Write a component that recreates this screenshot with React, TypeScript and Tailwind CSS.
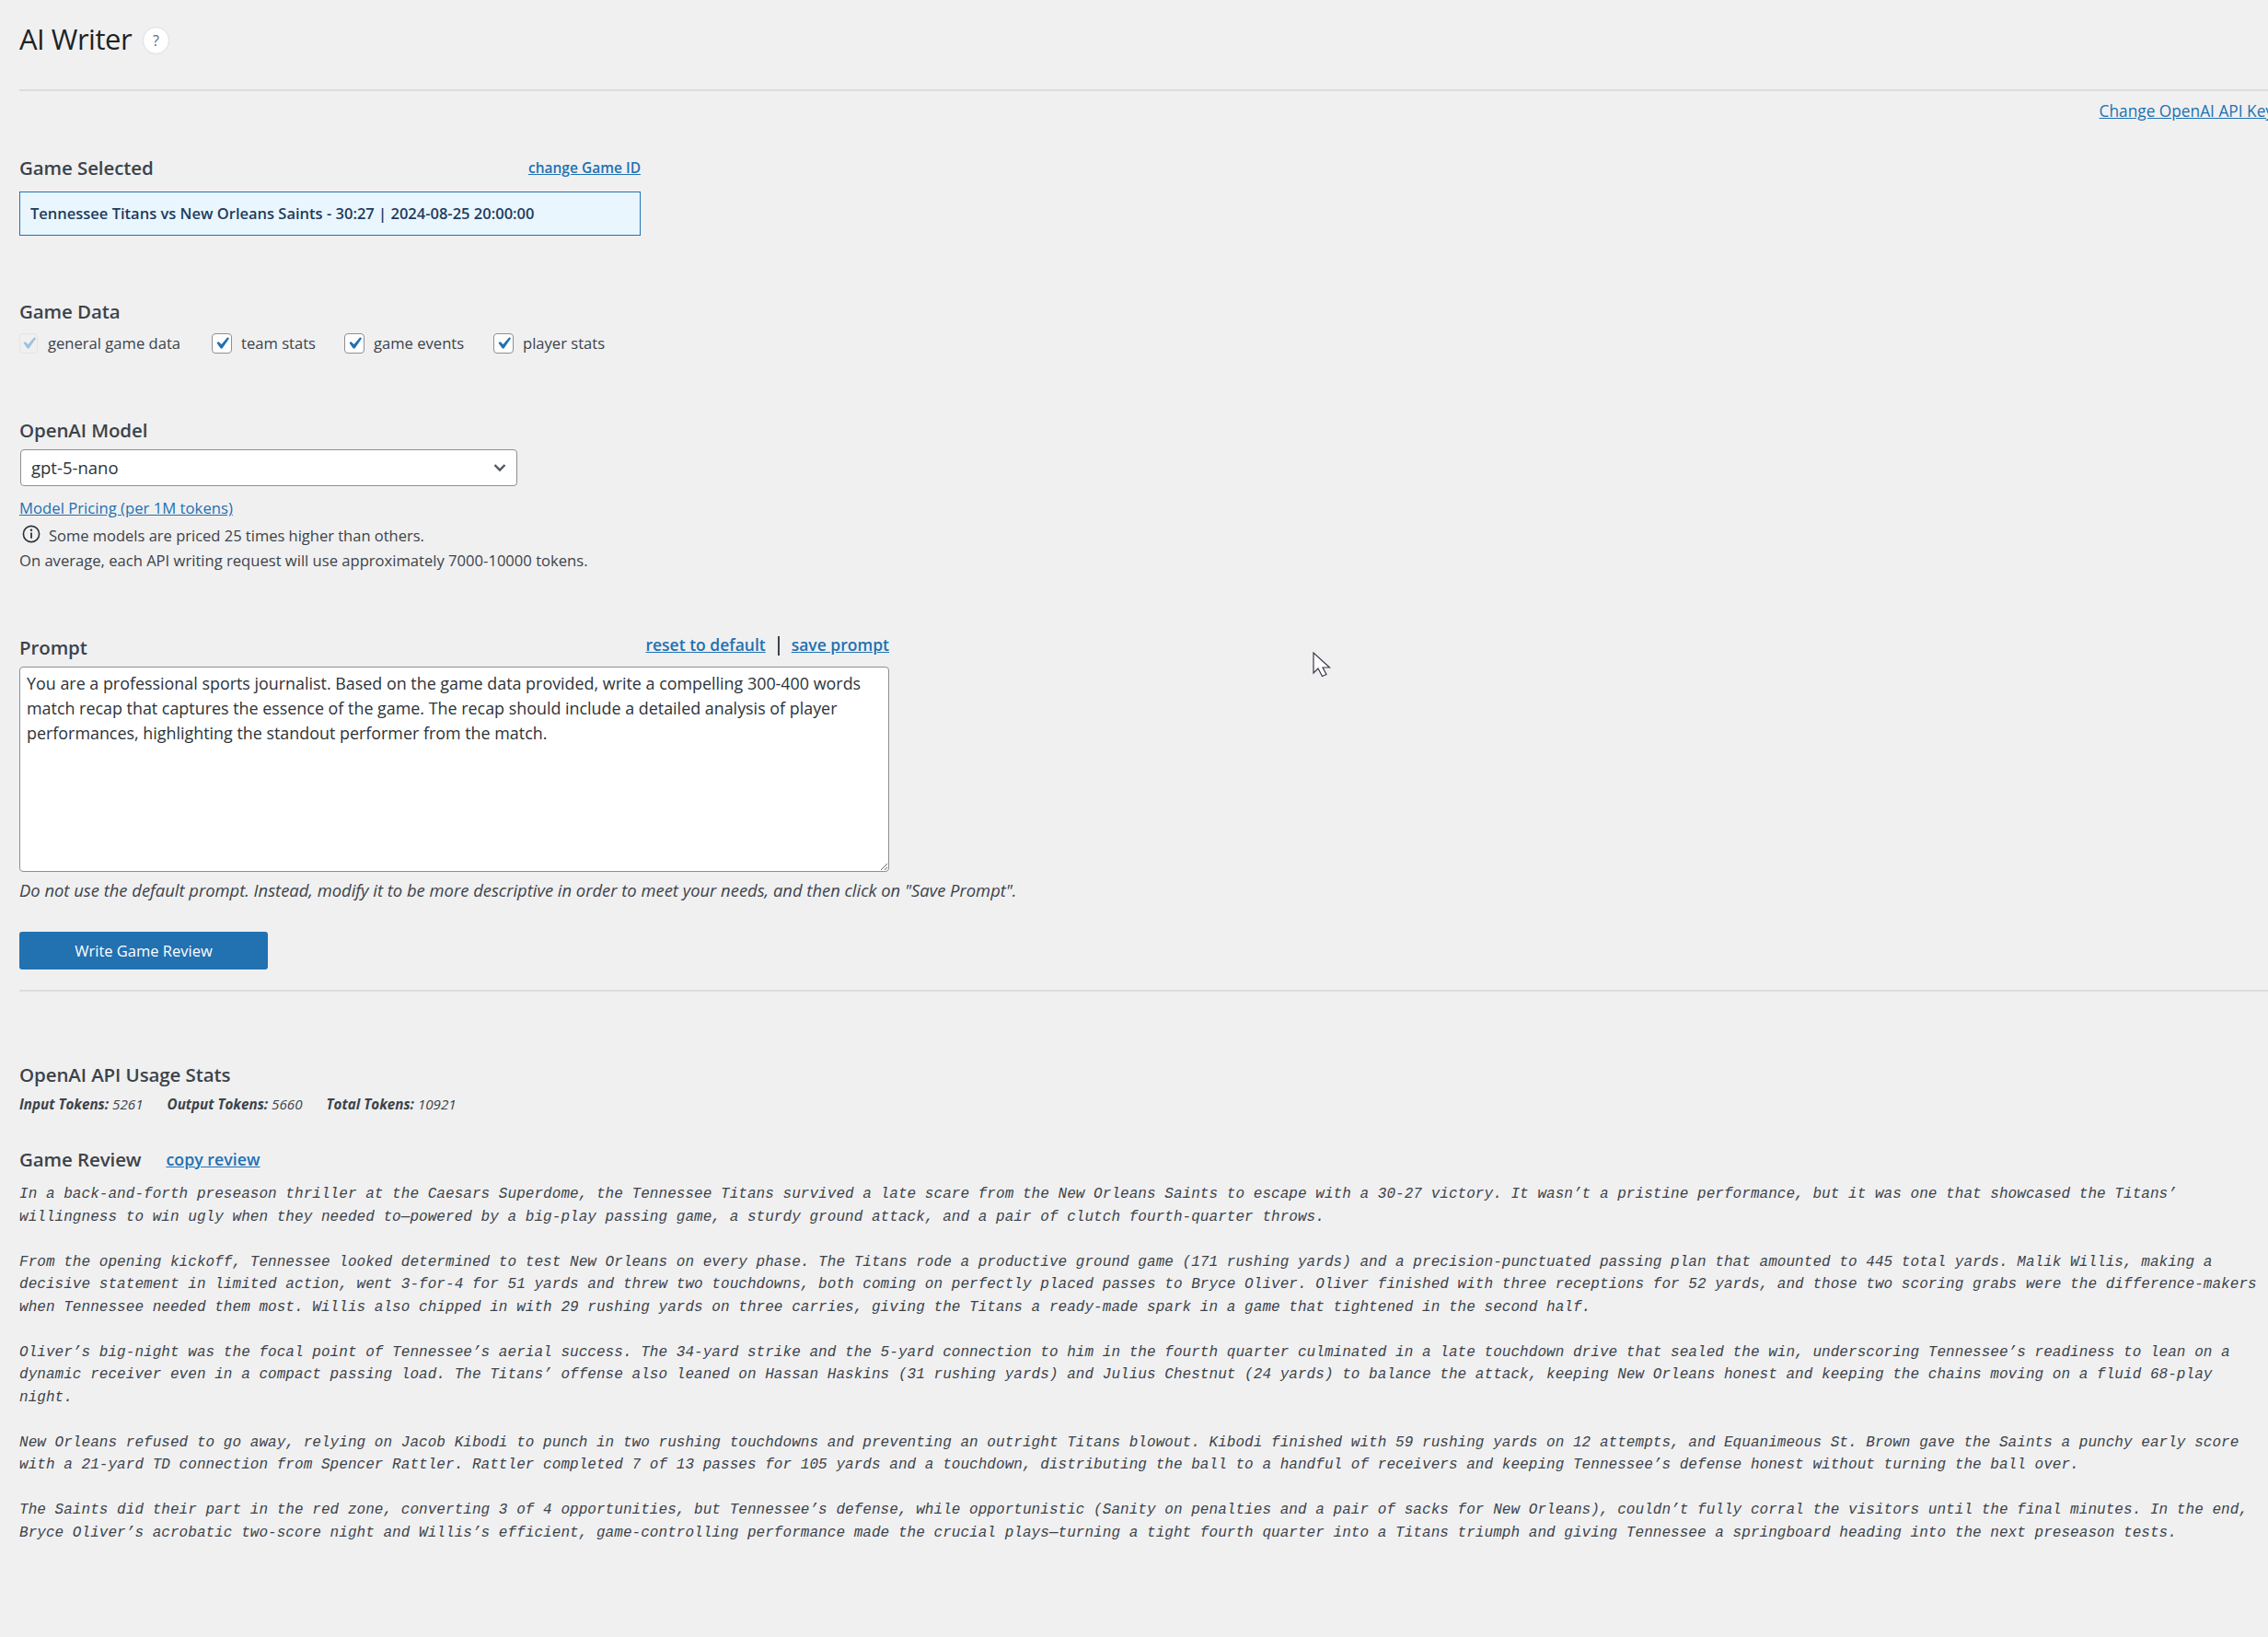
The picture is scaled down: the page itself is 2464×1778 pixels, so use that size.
const sans = "font-['Open_Sans','Liberation_Sans',sans-serif]";

const REVIEW = [
  "In a back-and-forth preseason thriller at the Caesars Superdome, the Tennessee Titans survived a late scare from the New Orleans Saints to escape with a 30-27 victory. It wasn’t a pristine performance, but it was one that showcased the Titans’ willingness to win ugly when they needed to—powered by a big-play passing game, a sturdy ground attack, and a pair of clutch fourth-quarter throws.",
  "From the opening kickoff, Tennessee looked determined to test New Orleans on every phase. The Titans rode a productive ground game (171 rushing yards) and a precision-punctuated passing plan that amounted to 445 total yards. Malik Willis, making a decisive statement in limited action, went 3-for-4 for 51 yards and threw two touchdowns, both coming on perfectly placed passes to Bryce Oliver. Oliver finished with three receptions for 52 yards, and those two scoring grabs were the difference-makers when Tennessee needed them most. Willis also chipped in with 29 rushing yards on three carries, giving the Titans a ready-made spark in a game that tightened in the second half.",
  "Oliver’s big-night was the focal point of Tennessee’s aerial success. The 34-yard strike and the 5-yard connection to him in the fourth quarter culminated in a late touchdown drive that sealed the win, underscoring Tennessee’s readiness to lean on a dynamic receiver even in a compact passing load. The Titans’ offense also leaned on Hassan Haskins (31 rushing yards) and Julius Chestnut (24 yards) to balance the attack, keeping New Orleans honest and keeping the chains moving on a fluid 68-play night.",
  "New Orleans refused to go away, relying on Jacob Kibodi to punch in two rushing touchdowns and preventing an outright Titans blowout. Kibodi finished with 59 rushing yards on 12 attempts, and Equanimeous St. Brown gave the Saints a punchy early score with a 21-yard TD connection from Spencer Rattler. Rattler completed 7 of 13 passes for 105 yards and a touchdown, distributing the ball to a handful of receivers and keeping Tennessee’s defense honest without turning the ball over.",
  "The Saints did their part in the red zone, converting 3 of 4 opportunities, but Tennessee’s defense, while opportunistic (Sanity on penalties and a pair of sacks for New Orleans), couldn’t fully corral the visitors until the final minutes. In the end, Bryce Oliver’s acrobatic two-score night and Willis’s efficient, game-controlling performance made the crucial plays—turning a tight fourth quarter into a Titans triumph and giving Tennessee a springboard heading into the next preseason tests.",
];

function Check({ disabled, label, className }: { disabled?: boolean; label: string; className: string }) {
  return (
    <div className={`flex items-center ${className}`}>
      <div
        className={
          disabled
            ? "mr-[11px] flex h-[22px] w-[20px] items-center justify-center rounded-[4px] border border-[#e4e4e6] bg-[#f0f0f1]"
            : "mr-[10px] flex h-[22px] w-[22px] items-center justify-center rounded-[4px] border border-[#8c8f94] bg-white"
        }
      >
        <svg width="26" height="26" viewBox="0 0 20 20" className="shrink-0">
          <path
            d="M14.83 4.89l1.34.94-5.81 8.38H9.02L5.78 9.67l1.34-1.25 2.57 2.4z"
            fill={disabled ? "#9fc2dd" : "#2271b1"}
          />
        </svg>
      </div>
      <span className="text-[16.6px] leading-6 text-[#3c434a]">{label}</span>
    </div>
  );
}

function Label({ children }: { children: React.ReactNode }) {
  return <div className="text-[20.5px] leading-6 font-semibold tracking-[-0.1px] text-[#3c434a]">{children}</div>;
}

export default function App() {
  return (
    <div className={`relative h-[1778px] w-full overflow-hidden bg-[#f0f0f1] ${sans}`}>
      <div className="w-[2470px] pl-[21px]">
        {/* Header */}
        <div className="flex h-[99px] items-start border-b-2 border-[#dcdcde] pt-[22px]">
          <h1 className="text-[31px] leading-10 tracking-[-0.5px] text-[#1d2327]">AI Writer</h1>
          <div className="mt-[7px] ml-[12px] flex h-[30px] w-[29px] items-center justify-center rounded-full border border-[#dcdcde] bg-white text-[16px] text-[#646970]">
            ?
          </div>
        </div>
        <div className="flex justify-end pt-[10px]">
          <a className="text-[17.3px] leading-6 text-[#2271b1] underline">Change OpenAI API Key</a>
        </div>

        {/* Game selected */}
        <div className="mt-[37px] flex w-[675px] items-center justify-between">
          <Label>Game Selected</Label>
          <a className="text-[15.5px] leading-6 font-semibold text-[#2271b1] underline">change Game ID</a>
        </div>
        <div className="mt-[14px] flex h-[48px] w-[675px] items-center border border-[#2271b1] bg-[#eaf6fe] pl-[11px] text-[16.5px] font-semibold text-[#1d3c5e]">
          Tennessee Titans vs New Orleans Saints - 30:27 | 2024-08-25 20:00:00
        </div>

        {/* Game data */}
        <div className="mt-[70px]">
          <Label>Game Data</Label>
        </div>
        <div className="mt-[12px] flex h-[22px]">
          <Check disabled label="general game data" className="w-[209px]" />
          <Check label="team stats" className="w-[144px]" />
          <Check label="game events" className="w-[162px]" />
          <Check label="player stats" className="" />
        </div>

        {/* Model */}
        <div className="mt-[71px]">
          <Label>OpenAI Model</Label>
        </div>
        <div className="mt-[9px] ml-[1px] flex h-[40px] w-[540px] items-center justify-between rounded-[4px] border border-[#8c8f94] bg-white pr-[8px] pl-[11px] text-[18.5px] text-[#2c3338]">
          gpt-5-nano
          <svg width="20" height="20" viewBox="0 0 20 20" fill="none">
            <path d="M4.500 7l5.500 5.500L15.500 7" stroke="#50575e" strokeWidth="2.400" />
          </svg>
        </div>
        <a className="mt-[12px] block text-[16.7px] leading-6 text-[#2271b1] underline">Model Pricing (per 1M tokens)</a>
        <div className="mt-[8px] flex h-[20px] items-center text-[16.5px] text-[#3c434a]">
          <svg className="mt-[-4px] ml-[3px]" width="20" height="20" viewBox="0 0 20 20" fill="none">
            <circle cx="10" cy="10" r="8.600" stroke="#2c3338" strokeWidth="1.600" />
            <circle cx="10" cy="5.800" r="1.200" fill="#2c3338" />
            <path d="M10 8.600v6.200" stroke="#2c3338" strokeWidth="1.800" />
          </svg>
          <span className="ml-[9px]">Some models are priced 25 times higher than others.</span>
        </div>
        <div className="mt-[5px] text-[16.6px] leading-6 text-[#3c434a]">
          On average, each API writing request will use approximately 7000-10000 tokens.
        </div>

        {/* Prompt */}
        <div className="mt-[71px] flex h-[24px] w-[945px] justify-between">
          <div className="mt-[-1px]">
            <Label>Prompt</Label>
          </div>
          <div className="mt-[-4px] flex items-start text-[17.5px] leading-6 font-semibold text-[#2271b1]">
            <a className="underline">reset to default</a>
            <span className="mx-[13px] mt-[3px] h-[21px] w-[2px] bg-[#3c434a]" />
            <a className="underline">save prompt</a>
          </div>
        </div>
        <textarea
          readOnly
          className="mt-[8px] block h-[223px] w-[945px] rounded-[4px] border border-[#8c8f94] bg-white px-[7px] py-[4px] text-[17.9px] leading-[27px] text-[#2c3338] outline-none"
          defaultValue="You are a professional sports journalist. Based on the game data provided, write a compelling 300-400 words match recap that captures the essence of the game. The recap should include a detailed analysis of player performances, highlighting the standout performer from the match."
        />
        <div className="mt-[8px] text-[18.4px] leading-6 text-[#3c434a] italic">
          Do not use the default prompt. Instead, modify it to be more descriptive in order to meet your needs, and then click on "Save Prompt".
        </div>
        <button className="mt-[33px] block h-[41px] w-[270px] rounded-[3px] bg-[#2271b1] pt-px text-[16.5px] text-white">
          Write Game Review
        </button>
        <div className="mt-[22px] h-[2px] bg-[#dcdcde]" />

        {/* Results */}
        <div className="mt-[78px]">
          <Label>OpenAI API Usage Stats</Label>
        </div>
        <div className="mt-[10px] flex h-[20px] items-center gap-[26px] text-[15.2px] text-[#3c434a] italic">
          <span>
            <b className="font-bold">Input Tokens:</b> 5261
          </span>
          <span>
            <b className="font-bold">Output Tokens:</b> 5660
          </span>
          <span>
            <b className="font-bold">Total Tokens:</b> 10921
          </span>
        </div>
        <div className="mt-[38px] flex h-[24px] items-center">
          <Label>Game Review</Label>
          <a className="ml-[27px] text-[17.8px] leading-6 font-semibold text-[#2271b1] underline">copy review</a>
        </div>
        <div className="mt-[14px] whitespace-pre-wrap pr-[10px] font-['Liberation_Mono',monospace] text-[16px] leading-[24.5px] tracking-[0.044px] text-[#3c434a] italic">
          {REVIEW.join("\n\n")}
        </div>
      </div>

      {/* Mouse pointer */}
      <svg className="absolute top-[708px] left-[1426px]" width="20" height="28" viewBox="0 0 20 28">
        <path d="M1 1v22l5-5 4.500 8.500 4.500-2-4-7.500h7.500z" fill="#fff" stroke="#3a3a4a" strokeWidth="1.200" />
      </svg>
    </div>
  );
}
